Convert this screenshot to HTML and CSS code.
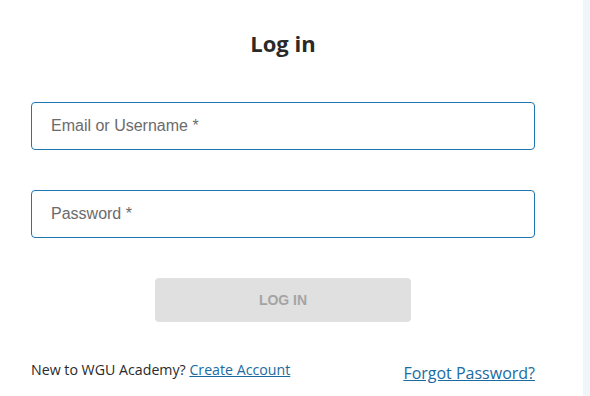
FILE: index.html
```html
<!DOCTYPE html>
<html lang="en">
<head>
    <meta charset="UTF-8">
    <meta name="viewport" content="width=device-width, initial-scale=1.0">
    <title>Log in</title>
    <link rel="stylesheet" href="styles.css">
</head>
<body>
    <div class="page">
        <div class="panel">
            <h1 class="title">Log in</h1>

            <!-- login form -->
            <form class="login-form" onsubmit="event.preventDefault()">
                <input type="text" class="field" placeholder="Email or Username *">
                <input type="password" class="field" placeholder="Password *">
                <button type="submit" class="login-btn" disabled>LOG IN</button>
            </form>

            <div class="footer">
                <p class="signup">New to WGU Academy? <a href="#">Create Account</a></p>
                <a href="#" class="forgot">Forgot Password?</a>
            </div>
        </div>
        <div class="side"></div>
    </div>
</body>
</html>
```

FILE: styles.css
```css
html, body {
    margin: 0;
    height: 100%;
}
body {
    font-family: "Open Sans", Arial, sans-serif;
    background-color: #fff;
    color: #2a2a2a;
}
.page {
    display: flex;
    height: 100%;
}
.panel {
    width: 504px;
    padding: 0 48px 0 31px;
}
.side {
    flex: 1;
    background-color: #f0f5fa;
}
.title {
    margin: 26px 0 0;
    height: 34px;
    font-size: 22px;
    line-height: 34px;
    font-weight: 700;
    text-align: center;
    color: #2a2a2a;
}
.login-form {
    display: flex;
    flex-direction: column;
    align-items: center;
    gap: 40px;
    margin-top: 42px;
}
.field {
    box-sizing: border-box;
    width: 504px;
    height: 48px;
    padding: 0 19px;
    border: 1px solid #1f76b0;
    border-radius: 4px;
    font-family: "Liberation Sans", Arial, sans-serif;
    font-size: 16px;
    color: #333;
    outline: none;
}
.field::placeholder {
    color: #6b6b6b;
}
.login-btn {
    width: 256px;
    height: 44px;
    border: none;
    border-radius: 4px;
    background-color: #e0e0e0;
    font-family: "Liberation Sans", Arial, sans-serif;
    font-size: 14px;
    font-weight: 700;
    color: #a4a4a4;
}
.footer {
    display: flex;
    justify-content: space-between;
    align-items: flex-end;
    margin-top: 38px;
}
.signup {
    margin: 0;
    font-size: 14.2px;
    line-height: 20px;
}
.signup a, .forgot {
    color: #1a6ba1;
}
.forgot {
    font-size: 16px;
    line-height: 22px;
    margin-bottom: -4px;
}
```
